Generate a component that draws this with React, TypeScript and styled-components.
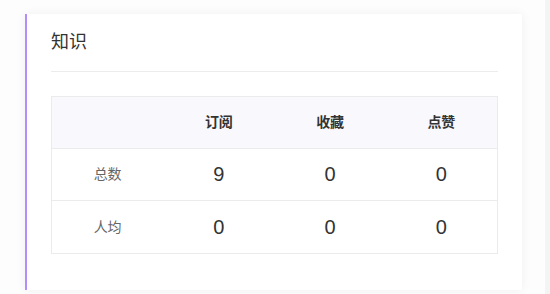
import React from "react";
import styled, { createGlobalStyle } from "styled-components";

const Global = createGlobalStyle`
  html, body {
    margin: 0;
    padding: 0;
    background: #fdfdfd;
  }
  body {
    font-family: "Liberation Sans", "Noto Sans CJK SC", sans-serif;
    color: #333;
  }
`;

const Shell = styled.div`
  display: flex;
  height: 294px;
  overflow: hidden;
`;

const Main = styled.main`
  flex: 1;
  padding: 14px 23px 4px 25px;
  box-sizing: border-box;
`;

const Gutter = styled.aside`
  width: 5px;
  background: #f4f4f5;
`;

const Card = styled.section`
  box-sizing: border-box;
  height: 276px;
  background: #fff;
  border-left: 2px solid #b28efc;
  box-shadow: 0 0 10px rgba(0, 0, 0, 0.06);
  padding: 16px 24px 0 24px;
`;

const Title = styled.h2`
  margin: 0;
  font-size: 18px;
  font-weight: 400;
  line-height: 24px;
  color: #333;
  padding: 0 0 17px 0;
  border-bottom: 1px solid #ececec;
`;

const Table = styled.div`
  margin-top: 24px;
  border: 1px solid #ebebeb;
  display: grid;
  grid-template-columns: repeat(4, 1fr);
`;

const Cell = styled.div<{ $head?: boolean; $label?: boolean; $last?: boolean }>`
  box-sizing: border-box;
  height: 52px;
  display: flex;
  align-items: center;
  justify-content: center;
  padding-bottom: ${(p) => (p.$head || p.$label ? "3px" : "0")};
  background: ${(p) => (p.$head ? "#f8f8fd" : "#fff")};
  border-bottom: ${(p) => (p.$last ? "none" : "1px solid #ebebeb")};
  font-size: ${(p) => (p.$head || p.$label ? "14px" : "20px")};
  font-weight: ${(p) => (p.$head ? 700 : 400)};
  color: ${(p) => (p.$label ? "#666" : "#333")};
`;

const heads = ["", "订阅", "收藏", "点赞"];
const rows: { label: string; values: number[] }[] = [
  { label: "总数", values: [9, 0, 0] },
  { label: "人均", values: [0, 0, 0] },
];

export default function App() {
  return (
    <>
      <Global />
      <Shell>
        <Main>
          <Card>
            <Title>知识</Title>
            <Table>
              {heads.map((h, i) => (
                <Cell key={`h${i}`} $head>
                  {h}
                </Cell>
              ))}
              {rows.map((r, ri) => {
                const last = ri === rows.length - 1;
                return (
                  <React.Fragment key={r.label}>
                    <Cell $label $last={last}>
                      {r.label}
                    </Cell>
                    {r.values.map((v, vi) => (
                      <Cell key={vi} $last={last}>
                        {v}
                      </Cell>
                    ))}
                  </React.Fragment>
                );
              })}
            </Table>
          </Card>
        </Main>
        <Gutter />
      </Shell>
    </>
  );
}
